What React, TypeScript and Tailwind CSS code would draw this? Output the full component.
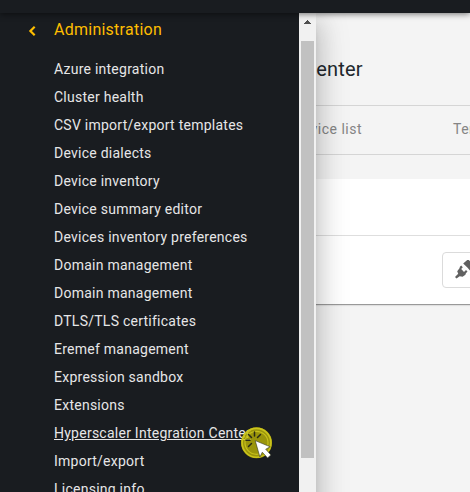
const menuItems = [
  'Azure integration',
  'Cluster health',
  'CSV import/export templates',
  'Device dialects',
  'Device inventory',
  'Device summary editor',
  'Devices inventory preferences',
  'Domain management',
  'Domain management',
  'DTLS/TLS certificates',
  'Eremef management',
  'Expression sandbox',
  'Extensions',
  'Hyperscaler Integration Center',
  'Import/export',
  'Licensing info',
];

const HOVERED = 'Hyperscaler Integration Center';

function ClickCursor() {
  return (
    <svg className="absolute left-[240px] top-[426px] z-30" width="34" height="34" viewBox="0 0 34 34">
      <circle cx="16.5" cy="16.8" r="15.5" fill="#c8bf04" fillOpacity="0.74" />
      <circle cx="16.5" cy="16.8" r="14.4" fill="none" stroke="#cbc41c" strokeWidth="1.6" />
      <circle cx="16.5" cy="16.8" r="11.5" fill="none" stroke="#c6bf1c" strokeWidth="1.2" />
      <g stroke="#292a16" strokeWidth="1.5" strokeLinecap="round">
        <path d="M14.5 6v4M8.5 8.5l3 3M6 14.3h4M8.5 20.5l3-3M20.5 8.5l-3 3" />
      </g>
      <path d="M15.2 14.6l15 6.2-4.5 2.4 5.2 5.7-3.3 3-5.3-5.7-2.4 4.8z" fill="#fff" stroke="#33351c" strokeWidth="0.6" />
    </svg>
  );
}

function PlugIcon() {
  return (
    <svg className="ml-3 shrink-0" width="21" height="20" viewBox="0 0 21 20" fill="#616161">
      <path d="M0 17l3.200-3.200-1-2.600L4.500 8.300l.4-1.600L6.200 5.600l1.600 1.600-1.600 1.900 2.800 2.800 2-1.800 1.500 1.500-1.600 1.700-.5 1.400-2.800 2.100-2.900-.6L1.500 18.500z" />
      <path d="M8.200 3.400L10.500 1.600 12.200 0h1.600l8 8-3.800 3.500-2.800-.8-2.600-3z" />
    </svg>
  );
}

function Sidebar() {
  return (
    <aside className="relative z-10 -mb-12 flex w-[316px] shrink-0 bg-[#191c20] shadow-[0_8px_10px_-5px_rgba(0,0,0,0.2),0_16px_24px_2px_rgba(0,0,0,0.14),0_6px_30px_5px_rgba(0,0,0,0.12)]">
      <nav className="w-[299px] overflow-hidden pl-[54px] tracking-[0.25px]">
        <div className="-ml-[26px] flex h-[33px] items-center text-base leading-6 text-[#ffbe00]">
          <svg className="mt-0.5 mr-[18px]" width="8" height="10" viewBox="0 0 8 10" fill="none" stroke="currentColor" strokeWidth="2.2">
            <path d="M6.7 0.8L2.4 5l4.3 4.2" />
          </svg>
          <span>Administration</span>
        </div>
        <ul className="mt-[9px] text-sm text-[#e6e6e7]">
          {menuItems.map((item, i) => (
            <li key={i} className="flex h-7 items-center whitespace-nowrap">
              <a className={item === HOVERED ? 'underline' : ''}>{item}</a>
            </li>
          ))}
        </ul>
      </nav>
      <div className="flex w-[17px] flex-col items-center bg-[#f1f1f1]">
        <div className="flex h-7 shrink-0 justify-center pt-[7px]">
          <svg width="7" height="4" viewBox="0 0 7 4" fill="#505050" shapeRendering="crispEdges">
            <path d="M3 0h1v1h1v1h1v1h1v1H0V3h1V2h1V1h1z" />
          </svg>
        </div>
        <div className="h-[417px] w-[13px] shrink-0 bg-[#c1c1c1]" />
      </div>
    </aside>
  );
}

function Content() {
  return (
    <main className="min-w-0 flex-1 overflow-hidden">
      <h1 className="flex h-[93px] items-center border-b border-[#d5d5d5] pt-5 text-xl tracking-[0.2px] text-[#22282d]">
        <span className="-ml-[13px] whitespace-nowrap">Center</span>
      </h1>
      <div className="flex h-[49px] items-center border-b border-[#d5d5d5] pb-[3px] text-sm tracking-[0.5px] text-[#858585]">
        <span className="-ml-[23px] w-[160px] shrink-0 whitespace-nowrap">Device list</span>
        <span className="whitespace-nowrap">Tenants</span>
      </div>
      <section className="mt-6 h-[126px] border-b border-[#999] bg-white shadow-[0_1px_1px_rgba(0,0,0,0.08)]">
        <div className="h-[57px] border-b border-[#dedede]" />
        <button className="ml-[126px] mt-4 flex h-9 w-24 items-center rounded-[4px] border border-[#dbdbdb]">
          <PlugIcon />
        </button>
      </section>
    </main>
  );
}

export default function App() {
  return (
    <div className="relative flex h-[492px] w-[470px] flex-col overflow-hidden bg-[#f4f4f4] font-[Roboto,sans-serif]">
      <header className="relative z-20 h-[13px] shrink-0 bg-[#191c20] shadow-[0_1px_6px_rgba(0,0,0,0.55)]" />
      <div className="flex min-h-0 flex-1">
        <Sidebar />
        <Content />
      </div>
      <ClickCursor />
    </div>
  );
}
